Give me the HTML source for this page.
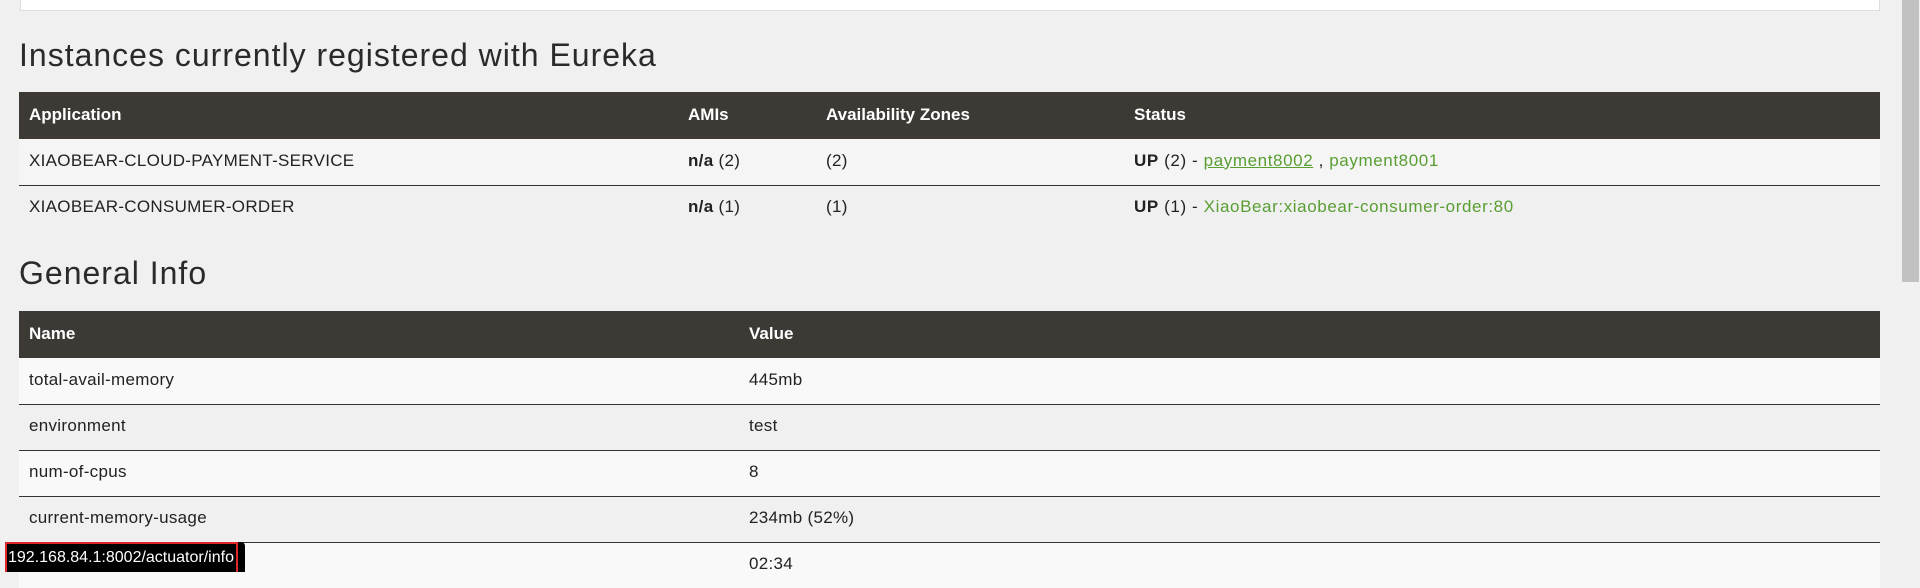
<!DOCTYPE html>
<html><head><meta charset="utf-8"><style>
*{margin:0;padding:0;box-sizing:border-box}
body{width:1920px;height:572px;overflow:hidden;background:#f0f0f0;font-family:"Liberation Sans",sans-serif;color:#222;position:relative}
.box{position:absolute;left:20px;top:-5px;width:1860px;height:16px;background:#fff;border:1px solid #ddd}
h2{position:absolute;left:19px;font-weight:normal;font-size:32px;letter-spacing:1px;color:#2c2a28;line-height:1}
table{position:absolute;left:19px;width:1861px;border-collapse:collapse;font-size:17px;letter-spacing:0.3px}
th{background:#3d3935;color:#fff;text-align:left;font-weight:bold;height:47px;padding:0 0 2px 10px;letter-spacing:0}
td{height:46px;padding:0 0 2px 10px;border-top:1px solid #333}
tr.a td{background:#f5f5f5}
tr.b td{background:#f0f0f0}
tr.c td{background:#f9f9f9}
.st{letter-spacing:0.6px}
.g{color:#5a9e33}
.u{text-decoration:underline}
.sb{position:absolute;left:1901px;top:0;width:19px;height:572px;background:#f1f1f1}
.th{position:absolute;left:1902px;top:0;width:17px;height:282px;background:#c1c1c1}
.tip{position:absolute;left:5px;top:542px;width:240px;height:30px;background:#000;border-radius:0 4px 0 0}
.tipb{position:absolute;left:5px;top:542px;width:233px;height:30px;border:2px solid #e0262b;border-bottom:none;color:#fff;font-size:16px;letter-spacing:0;line-height:28px;padding-left:1px;white-space:nowrap;overflow:hidden}
</style></head><body>
<div class="box"></div>
<h2 style="top:39px">Instances currently registered with Eureka</h2>
<table style="top:92px">
<tr><th style="width:659px">Application</th><th style="width:138px">AMIs</th><th style="width:308px">Availability Zones</th><th>Status</th></tr>
<tr class="a"><td style="border-top:none">XIAOBEAR-CLOUD-PAYMENT-SERVICE</td><td style="border-top:none"><b>n/a</b> (2)</td><td style="border-top:none">(2)</td><td class="st" style="border-top:none"><b>UP</b> (2) - <span class="g u">payment8002</span> , <span class="g">payment8001</span></td></tr>
<tr class="b"><td>XIAOBEAR-CONSUMER-ORDER</td><td><b>n/a</b> (1)</td><td>(1)</td><td class="st"><b>UP</b> (1) - <span class="g">XiaoBear:xiaobear-consumer-order:80</span></td></tr>
</table>
<h2 style="top:257px">General Info</h2>
<table style="top:311px">
<tr><th style="width:720px">Name</th><th>Value</th></tr>
<tr class="c"><td style="border-top:none">total-avail-memory</td><td style="border-top:none">445mb</td></tr>
<tr class="b"><td>environment</td><td>test</td></tr>
<tr class="c"><td>num-of-cpus</td><td>8</td></tr>
<tr class="b"><td>current-memory-usage</td><td>234mb (52%)</td></tr>
<tr class="c"><td></td><td>02:34</td></tr>
</table>
<div class="sb"></div><div class="th"></div>
<div class="tip"></div>
<div class="tipb">192.168.84.1:8002/actuator/info</div>
</body></html>
